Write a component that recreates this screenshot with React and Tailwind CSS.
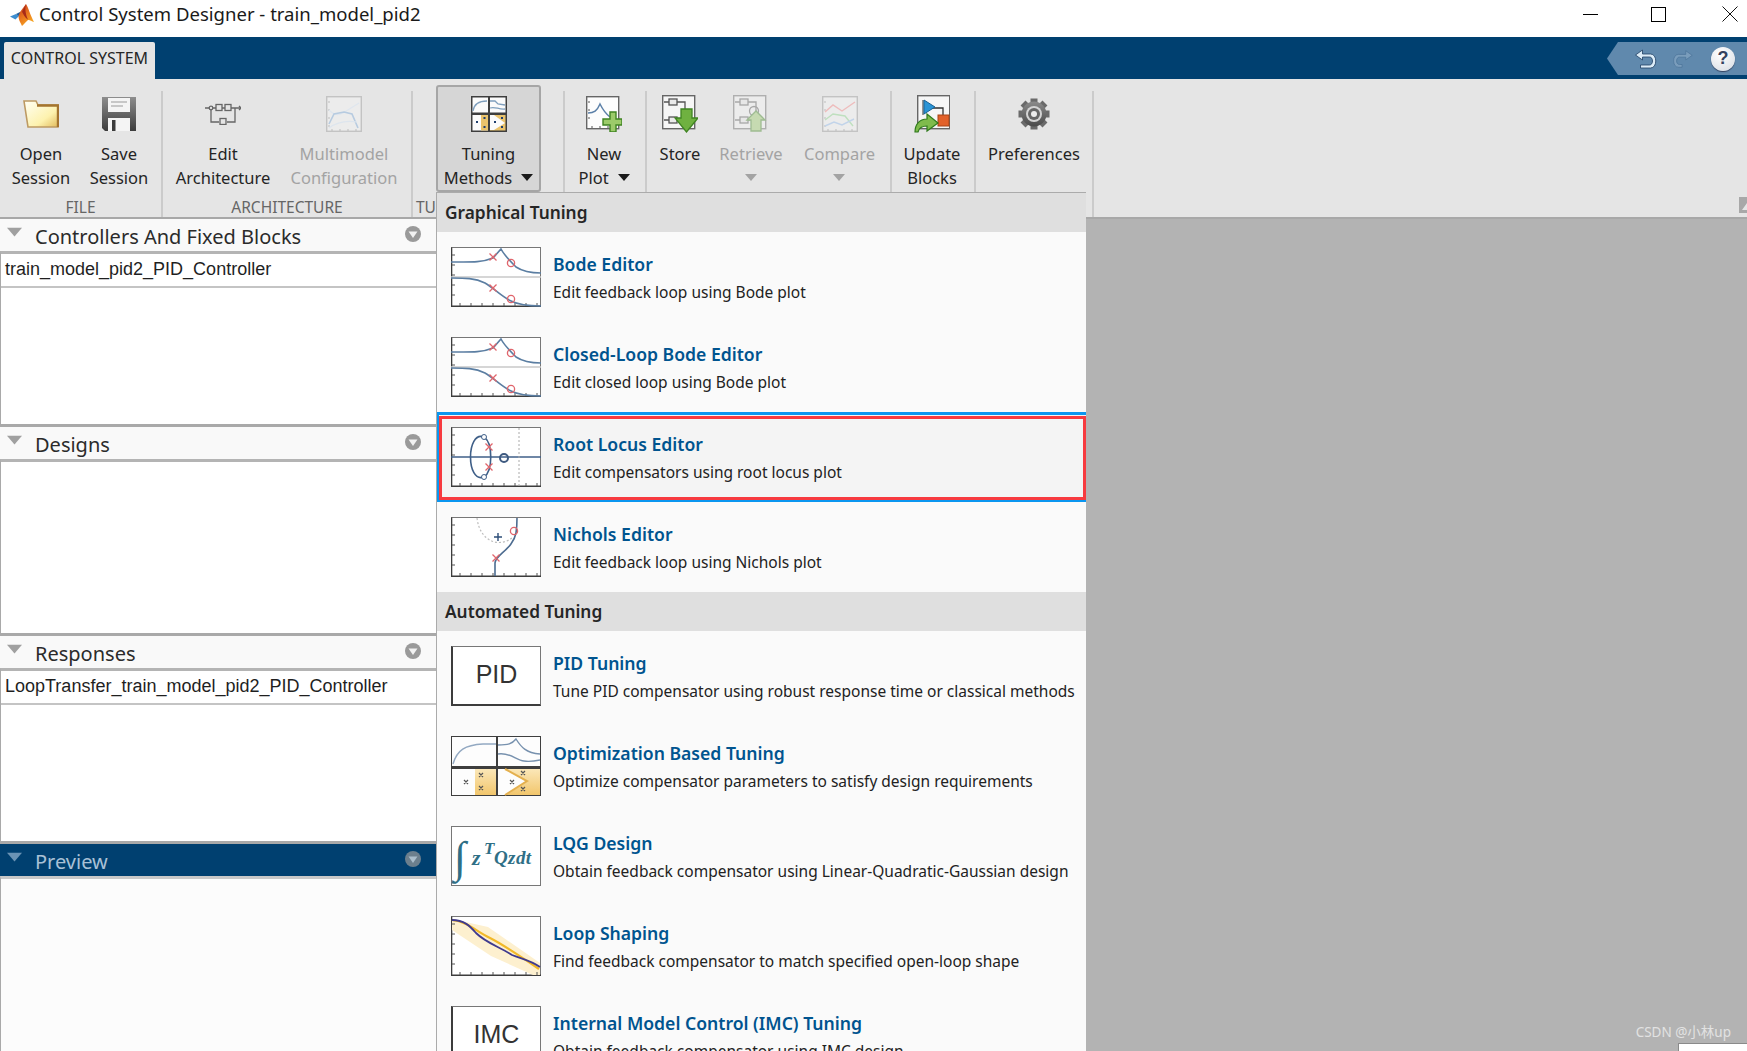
import React from 'react';

const ui = 'font-["Noto_Sans",sans-serif]';

function Caret({ className = '', color = '#1a1a1a' }) {
  return (
    <svg width="12" height="7" viewBox="0 0 12 7" className={className}>
      <path d="M0 0h12L6 7z" fill={color} />
    </svg>
  );
}

function MatlabLogo() {
  return (
    <svg width="24" height="22" viewBox="0 0 24 22">
      <defs>
        <linearGradient id="mlPeak" x1="0" y1="0" x2="0.6" y2="1">
          <stop offset="0" stopColor="#c8361e" />
          <stop offset="0.6" stopColor="#ea7a1e" />
          <stop offset="1" stopColor="#f6a723" />
        </linearGradient>
      </defs>
      <path d="M0 12.5l6-2.6 3 2.2-3.6 3.4z" fill="#3d8ed0" />
      <path d="M6 9.9l4-2 2 3-3 1.4z" fill="#1f5f9e" />
      <path d="M10 8L16 0c1.800 2 5 13 8 18-2.500-1-4.500-2.500-6-2-1.500 1.500-4 4-6 6-1-3-3-4.500-3.500-9.500z" fill="url(#mlPeak)" />
      <path d="M16 0c-1 4-1 9 2 15.800-3-2-5-6-6-8z" fill="#a82a18" />
    </svg>
  );
}

function FolderIcon() {
  return (
    <svg width="36" height="28" viewBox="0 0 36 28">
      <defs>
        <linearGradient id="folderFill" x1="0" y1="0" x2="1" y2="1">
          <stop offset="0" stopColor="#fffff6" />
          <stop offset="0.65" stopColor="#fdf2ae" />
          <stop offset="1" stopColor="#e2bb5c" />
        </linearGradient>
      </defs>
      <path d="M1 1h12l2 4h20v22H5z" fill="url(#folderFill)" stroke="#bd9a63" strokeWidth="1.600" />
      <path d="M14 5.500h21v21.500" fill="none" stroke="#a4742f" strokeWidth="2.400" />
    </svg>
  );
}

function SaveIcon() {
  return (
    <svg width="34" height="34" viewBox="0 0 34 34">
      <defs>
        <linearGradient id="saveFill" x1="0" y1="0" x2="0" y2="1">
          <stop offset="0" stopColor="#8d8d8d" />
          <stop offset="1" stopColor="#3c3c3c" />
        </linearGradient>
      </defs>
      <path d="M0 0h34v34H3l-3-3z" fill="url(#saveFill)" />
      <rect x="6" y="1" width="22" height="14" fill="#f4f4f4" />
      <path d="M9 5h16M9 9h12" stroke="#9a9a9a" strokeWidth="1.200" />
      <rect x="6" y="21" width="22" height="13" fill="#f4f4f4" />
      <rect x="10" y="23" width="3.500" height="11" fill="#3c3c3c" />
    </svg>
  );
}

function ArchIcon() {
  return (
    <svg width="36" height="22" viewBox="0 0 36 22" fill="none" stroke="#666" strokeWidth="1.300">
      <path d="M0 5h36M6 5v14h8M22 19h8V5" />
      <circle cx="6" cy="5" r="1.800" fill="#e5e5e5" />
      <rect x="11" y="1.500" width="6" height="6" fill="#e5e5e5" />
      <rect x="20" y="1.500" width="6" height="6" fill="#e5e5e5" />
      <rect x="15" y="15.500" width="6" height="6" fill="#e5e5e5" />
      <path d="M34 3l2 2-2 2" />
    </svg>
  );
}

function FadedPlot({ lines }) {
  return (
    <svg width="36" height="36" viewBox="0 0 36 36">
      <rect x="0.700" y="0.700" width="34.600" height="34.600" fill="#ececec" stroke="#c3c3c3" strokeWidth="1.400" />
      <path d="M2 6h2M2 14h2M2 22h2M2 30h2M6 33v2M14 33v2M22 33v2M30 33v2" stroke="#bdbdbd" />
      {lines.map((l, i) => (
        <path key={i} d={l.d} fill="none" stroke={l.c} strokeWidth={l.w || 1.200} />
      ))}
    </svg>
  );
}

function TuningIcon() {
  return (
    <svg width="36" height="36" viewBox="0 0 36 36">
      <rect width="36" height="36" fill="#3e3e3e" />
      <rect x="1.500" y="1.500" width="15.500" height="15" fill="#fbfbfb" />
      <rect x="19" y="1.500" width="15.500" height="15" fill="#fbfbfb" />
      <rect x="1.500" y="19" width="15.500" height="15.500" fill="#fbfbfb" />
      <rect x="10" y="19" width="7" height="15.500" fill="#eac36c" />
      <rect x="19" y="19" width="15.500" height="15.500" fill="#eac36c" />
      <path d="M19 19h4l11 8-11 7h-4z" fill="#fbfbfb" />
      <path d="M2 15c1-7 6-10 14-10M19 5h5l3 3 7 1M19 12c5-2 9 2 15 1" fill="none" stroke="#7f9fbd" strokeWidth="1.300" />
      <g fill="#1f3f6f">
        <rect x="5" y="25" width="2" height="2" />
        <rect x="12.500" y="21" width="2" height="2" />
        <rect x="12.500" y="30" width="2" height="2" />
        <rect x="23" y="25" width="2" height="2" />
        <rect x="30" y="21" width="2" height="2" />
        <rect x="30" y="30" width="2" height="2" />
      </g>
    </svg>
  );
}

function NewPlotIcon() {
  return (
    <svg width="36" height="36" viewBox="0 0 36 36">
      <rect x="0.700" y="0.700" width="32" height="32" fill="#fdfdfd" stroke="#666" strokeWidth="1.400" />
      <path d="M2 6h2M2 14h2M2 22h2M6 30v2M14 30v2M22 30v2" stroke="#555" />
      <path d="M2 17c6 0 9-2 12-9 3 6 6 10 10 13" fill="none" stroke="#5c80a8" strokeWidth="1.500" />
      <path d="M24 16h6v7h6v6h-6v7h-6v-7h-7v-6h7z" fill="#9ccb6a" stroke="#3f8422" strokeWidth="1.400" />
    </svg>
  );
}

function StoreIcon({ faded }) {
  return (
    <svg width="36" height="38" viewBox="0 0 36 38" opacity={faded ? 0.42 : 1}>
      <rect x="0.700" y="0.700" width="32" height="33" fill="#f6f6f6" stroke="#666" strokeWidth="1.400" />
      <g fill="#eaeaea" stroke="#555" strokeWidth="1.300">
        <rect x="7" y="4" width="8" height="6" />
        <rect x="7" y="22" width="8" height="6" />
        <path d="M2 7h5M15 7h8v9M2 25h5M15 25h8" fill="none" />
      </g>
      {faded ? (
        <>
          <circle cx="21" cy="16" r="4.500" fill="none" stroke="#555" strokeWidth="1.300" />
          <path d="M14 25l9-9 9 9h-4v11h-10V25z" fill="#9ccb6a" stroke="#3f8422" strokeWidth="1.300" />
        </>
      ) : (
        <path d="M19 14h11v9h6L24.500 37 13 23h6z" fill="#6fb140" stroke="#3f8422" strokeWidth="1.300" />
      )}
    </svg>
  );
}

function UpdateIcon() {
  return (
    <svg width="36" height="38" viewBox="0 0 36 38">
      <rect x="3.700" y="0.700" width="32" height="33" fill="#f6f6f6" stroke="#666" strokeWidth="1.400" />
      <path d="M9 5v15" stroke="#333" />
      <path d="M14 13h15v8" fill="none" stroke="#333" strokeWidth="1.300" />
      <path d="M10 5l11 7-11 7z" fill="#2a94d6" stroke="#1a6296" />
      <rect x="24" y="20" width="11" height="11" fill="#e2612a" stroke="#a84416" />
      <path d="M1 37c0-7 4-13 12-13v-5l11 9-11 8v-5c-5 0-8 2-9 6z" fill="#7fbb4c" stroke="#2f7a1c" strokeWidth="1.200" />
    </svg>
  );
}

function GearIcon() {
  const teeth = [0, 45, 90, 135, 180, 225, 270, 315];
  return (
    <svg width="32" height="32" viewBox="0 0 32 32">
      <defs>
        <linearGradient id="gearFill" x1="0" y1="0" x2="0" y2="1">
          <stop offset="0" stopColor="#8a8a8a" />
          <stop offset="1" stopColor="#4a4a4a" />
        </linearGradient>
      </defs>
      {teeth.map((a) => (
        <rect key={a} x="12.500" y="0.500" width="7" height="6" fill="#6a6a6a" transform={`rotate(${a} 16 16)`} />
      ))}
      <circle cx="16" cy="16" r="12.500" fill="url(#gearFill)" />
      <circle cx="16" cy="16" r="8" fill="#d4d4d4" />
      <circle cx="16" cy="16" r="6" fill="#666" />
      <circle cx="16" cy="16" r="3" fill="#ececec" />
    </svg>
  );
}

// caret sits after the last label line, or on its own line for one-line tools
function Tool({ w, icon, lines, caret, disabled, active }) {
  const textColor = disabled ? 'text-[#a3a3a3]' : 'text-[#242424]';
  const caretColor = disabled ? '#a3a3a3' : '#1a1a1a';
  return (
    <div
      className={`flex flex-col items-center shrink-0 ${w} ${
        active
          ? 'relative z-0 -mt-[6px] h-[107px] pt-[9px] rounded-[3px] border-2 border-[#a6a6a6] bg-[#d6d6d6]'
          : 'pt-[5px]'
      }`}
    >
      <div className="h-[36px] flex items-center justify-center">{icon}</div>
      <div className={`mt-[10px] text-center text-[16.5px] leading-[23.500px] whitespace-nowrap ${textColor}`}>
        {lines.map((l, i) => (
          <div key={i} className="flex items-center justify-center gap-[9px]">
            {l}
            {caret && lines.length > 1 && i === lines.length - 1 && <Caret color={caretColor} />}
          </div>
        ))}
        {caret && lines.length === 1 && (
          <div className="h-[23.500px] flex items-center justify-center">
            <Caret color={caretColor} />
          </div>
        )}
      </div>
    </div>
  );
}

function Group({ w, label, labelClass = 'text-center', children }) {
  return (
    <div className={`${w} shrink-0 mt-[12px] flex flex-col border-r-2 border-[#cbcbcb]`}>
      <div className="flex flex-1">{children}</div>
      <div className={`h-[20px] text-[15.500px] leading-[20px] text-[#666] ${labelClass}`}>{label}</div>
    </div>
  );
}

function Toolstrip() {
  return (
    <div className="flex h-[140px] shrink-0 bg-[#e5e5e5] border-b-2 border-[#a8a8a8]">
      <Group w="w-[163px]" label="FILE">
        <Tool w="w-[82px]" icon={<FolderIcon />} lines={['Open', 'Session']} />
        <Tool w="w-[74px]" icon={<SaveIcon />} lines={['Save', 'Session']} />
      </Group>
      <Group w="w-[250px]" label="ARCHITECTURE">
        <Tool w="w-[120px]" icon={<ArchIcon />} lines={['Edit', 'Architecture']} />
        <Tool
          w="w-[122px]"
          disabled
          icon={
            <FadedPlot
              lines={[
                { d: 'M3 14c6 6 10 5 14 3l16-10', c: '#dfe6ee' },
                { d: 'M3 28l5-10 10-2 8 2 6 14', c: '#b7cbe0', w: 1.600 },
                { d: 'M3 32c8-6 16-8 28-6', c: '#dde5ee' },
              ]}
            />
          }
          lines={['Multimodel', 'Configuration']}
        />
      </Group>
      <Group w="w-[152px]" label="TU" labelClass="pl-[3px]">
        <div className="w-[23px] shrink-0" />
        <Tool w="w-[105px]" active caret icon={<TuningIcon />} lines={['Tuning', 'Methods']} />
      </Group>
      <Group w="w-[82px]" label="">
        <Tool w="w-[78px]" caret icon={<NewPlotIcon />} lines={['New', 'Plot']} />
      </Group>
      <Group w="w-[245px]" label="">
        <Tool w="w-[66px]" icon={<StoreIcon />} lines={['Store']} />
        <Tool w="w-[76px]" disabled caret icon={<StoreIcon faded />} lines={['Retrieve']} />
        <Tool
          w="w-[101px]"
          disabled
          caret
          icon={
            <FadedPlot
              lines={[
                { d: 'M3 16l8-7 9 6 13-9', c: '#eebcbc', w: 1.400 },
                { d: 'M3 24l8-6 12 2 8 10', c: '#bfe0bf', w: 1.400 },
                { d: 'M3 30l9-4 8 3 12-6', c: '#c2d4ea', w: 1.400 },
              ]}
            />
          }
          lines={['Compare']}
        />
      </Group>
      <Group w="w-[84px]" label="">
        <Tool w="w-[80px]" icon={<UpdateIcon />} lines={['Update', 'Blocks']} />
      </Group>
      <Group w="w-[118px]" label="">
        <Tool w="w-[116px]" icon={<GearIcon />} lines={['Preferences']} />
      </Group>
      <div className="flex-1 flex items-end justify-end pb-[4px]">
        <svg width="8" height="16" viewBox="0 0 8 16">
          <path d="M0 0h8v3H3l5 0v3L3 13h5v3H0z" fill="#a8a8a8" />
        </svg>
      </div>
    </div>
  );
}

function CircleBadge() {
  return (
    <svg width="16" height="16" viewBox="0 0 16 16" className="shrink-0">
      <circle cx="8" cy="8" r="8" fill="#9a9a9a" />
      <path d="M3.500 5.500h9L8 12z" fill="#f2f2f2" />
    </svg>
  );
}

function Section({ title, h, item, selected }) {
  const headerCls = selected ? 'bg-[#004070] text-[#a9c1d6]' : 'bg-[#f9f9f9] text-[#2b2b2b]';
  return (
    <div className={`${h} flex flex-col`}>
      <div className={`h-[32px] shrink-0 flex items-center pl-[7px] pr-[16px] ${headerCls}`}>
        <Caret color={selected ? '#6b93b4' : '#a0a0a0'} className="w-[15px] h-[10px] -mt-[6px]" />
        <span className="ml-[13px] text-[20px] leading-[26px] flex-1 mt-[3px]">{title}</span>
        <div className={selected ? 'opacity-70 -mt-[2px]' : '-mt-[2px]'}>
          <CircleBadge />
        </div>
      </div>
      <div
        className={`flex-1 min-h-0 border-x border-[#a9a9a9] border-t-[3px] ${
          selected ? 'border-t-[#c8c8c8] bg-[#fcfcfc]' : 'border-t-[#b4b4b4] border-b-[3px] border-b-[#a9a9a9] bg-white'
        }`}
      >
        {item && (
          <div className='h-[34px] border-b-2 border-[#c4c4c4] pl-[4px] font-["Liberation_Sans",sans-serif] text-[18px] leading-[31px] text-[#1f1f1f]'>
            {item}
          </div>
        )}
      </div>
    </div>
  );
}

function IconFrame({ children }) {
  return (
    <svg width="90" height="60" viewBox="0 0 90 60" className="block shrink-0">
      <rect x="0.500" y="0.500" width="89" height="59" fill="#fff" stroke="#777" />
      <path d="M0.500 60V0.500M0 59.200h90" stroke="#3c3c3c" strokeWidth="1.600" />
      {children}
    </svg>
  );
}

const Ticks = () => (
  <path
    d="M1 8h3M1 18h3M1 28h3M1 38h3M1 48h3M9 56v3M20 56v3M31 56v3M42 56v3M53 56v3M64 56v3M75 56v3M86 56v3"
    stroke="#555"
  />
);

function RedX({ x, y }) {
  return <path d={`M${x - 3.500} ${y - 3.500}l7 7m0-7l-7 7`} stroke="#e0656c" strokeWidth="1.300" />;
}

function BodeGlyph() {
  return (
    <IconFrame>
      <Ticks />
      <path d="M0 30h90" stroke="#c8c8c8" strokeWidth="1.500" />
      <path d="M0 15c18 0 30 1 42-4l8-9c3 6 9 12 15 18 6 4 14 6 25 6" fill="none" stroke="#5b7ea2" strokeWidth="1.600" />
      <path d="M0 31c14 0 24 0 34 5 10 6 16 13 26 18 8 4 18 5 30 5" fill="none" stroke="#5b7ea2" strokeWidth="1.600" />
      <RedX x={42} y={10} />
      <circle cx="60" cy="16" r="3.600" fill="none" stroke="#e0656c" strokeWidth="1.300" />
      <RedX x={42} y={41} />
      <circle cx="60" cy="52" r="3.600" fill="none" stroke="#e0656c" strokeWidth="1.300" />
    </IconFrame>
  );
}

function RootGlyph() {
  return (
    <IconFrame>
      <Ticks />
      <path d="M0 30h90" stroke="#3f5f88" strokeWidth="1.400" />
      <path d="M68 1v58" stroke="#aaa" strokeDasharray="2 2" />
      <path d="M33 10c-18-7-18 47 0 40M33 10c9 6 9 34 0 40" fill="none" stroke="#3f5f88" strokeWidth="1.600" />
      <circle cx="33" cy="10" r="2.500" fill="#fff" stroke="#3f5f88" />
      <circle cx="33" cy="50" r="2.500" fill="#fff" stroke="#3f5f88" />
      <circle cx="53" cy="31" r="4" fill="none" stroke="#3e5a80" strokeWidth="2" />
      <RedX x={38} y={20} />
      <RedX x={38} y={40} />
    </IconFrame>
  );
}

function NicholsGlyph() {
  return (
    <IconFrame>
      <Ticks />
      <path d="M26 1c3 25 24 30 36 19" fill="none" stroke="#bdbdbd" strokeDasharray="2 2" strokeWidth="1.200" />
      <path d="M44 59V46c0-8 18-14 21-30 1-6 1-10 1-15" fill="none" stroke="#4d6c90" strokeWidth="1.600" />
      <path d="M47 16v8M43 20h8" stroke="#2d4d78" strokeWidth="1.400" />
      <RedX x={45} y={41} />
      <circle cx="63" cy="14" r="3.600" fill="none" stroke="#e0656c" strokeWidth="1.300" />
    </IconFrame>
  );
}

function TextGlyph({ text }) {
  return (
    <div className='w-[90px] h-[60px] shrink-0 flex items-center justify-center pb-[2px] border border-[#777] border-l-2 border-b-2 border-l-[#3c3c3c] border-b-[#3c3c3c] bg-white font-["Liberation_Sans",sans-serif] text-[25px] text-[#333]'>
      {text}
    </div>
  );
}

function OptGlyph() {
  return (
    <svg width="90" height="60" viewBox="0 0 90 60" className="block shrink-0">
      <defs>
        <linearGradient id="optYel" x1="0" y1="0" x2="0" y2="1">
          <stop offset="0" stopColor="#fbe7b8" />
          <stop offset="1" stopColor="#f2c66c" />
        </linearGradient>
      </defs>
      <rect width="90" height="60" fill="#3e3e3e" />
      <rect x="1" y="1" width="44" height="29" fill="#fdfdfd" />
      <rect x="47" y="1" width="42" height="29" fill="#fdfdfd" />
      <rect x="1" y="33" width="44" height="26" fill="#fdfdfd" />
      <rect x="24" y="33" width="21" height="26" fill="url(#optYel)" />
      <rect x="47" y="33" width="42" height="26" fill="url(#optYel)" />
      <path d="M47 33h8l22 12-22 14h-8z" fill="#fdfdfd" />
      <path d="M54 33l22 12-22 14" fill="none" stroke="#e4b04e" strokeWidth="2" />
      <path d="M2 28c4-14 12-19 30-20h13" fill="none" stroke="#93a9c2" strokeWidth="1.400" />
      <path d="M47 9c10 0 14-1 18-6 5 8 10 14 24 15M47 18c12-2 18 6 26 7 6 1 11 0 16-1" fill="none" stroke="#7791ae" strokeWidth="1.400" />
      <g stroke="#555" strokeWidth="1.200">
        <path d="M13 44l4 4m0-4l-4 4M28 37l4 4m0-4l-4 4M28 50l4 4m0-4l-4 4M59 44l4 4m0-4l-4 4M70 35l4 4m0-4l-4 4M70 51l4 4m0-4l-4 4" />
      </g>
    </svg>
  );
}

function LqgGlyph() {
  return (
    <svg width="90" height="60" viewBox="0 0 90 60" className="block shrink-0">
      <rect x="0.500" y="0.500" width="89" height="59" fill="#fff" stroke="#777" />
      <g fill="#2f6f86" fontFamily="'Liberation Serif', serif" fontStyle="italic" fontWeight="bold">
        <text x="3" y="46" fontSize="44" fontWeight="normal">∫</text>
        <text x="21" y="39" fontSize="22">z</text>
        <text x="33" y="28" fontSize="17">T</text>
        <text x="43" y="38" fontSize="19" letterSpacing="0.400">Qzdt</text>
      </g>
    </svg>
  );
}

function LoopGlyph() {
  return (
    <IconFrame>
      <path d="M1 3l36 8 52 36v12H82L40 40 1 14z" fill="#fdf0cf" />
      <Ticks />
      <path d="M1 4c16 2 22 10 38 18 12 6 30 18 49 31" fill="none" stroke="#f2b929" strokeWidth="2.200" />
      <path d="M1 4c12 0 18 6 24 13 10 10 24 14 36 22 10 4 18 5 28 12" fill="none" stroke="#3f3a8e" strokeWidth="1.800" />
    </IconFrame>
  );
}

const graphicalItems = [
  { title: 'Bode Editor', desc: 'Edit feedback loop using Bode plot', glyph: <BodeGlyph /> },
  { title: 'Closed-Loop Bode Editor', desc: 'Edit closed loop using Bode plot', glyph: <BodeGlyph /> },
  { title: 'Root Locus Editor', desc: 'Edit compensators using root locus plot', glyph: <RootGlyph />, hot: true },
  { title: 'Nichols Editor', desc: 'Edit feedback loop using Nichols plot', glyph: <NicholsGlyph /> },
];

const automatedItems = [
  { title: 'PID Tuning', desc: 'Tune PID compensator using robust response time or classical methods', glyph: <TextGlyph text="PID" /> },
  { title: 'Optimization Based Tuning', desc: 'Optimize compensator parameters to satisfy design requirements', glyph: <OptGlyph /> },
  { title: 'LQG Design', desc: 'Obtain feedback compensator using Linear-Quadratic-Gaussian design', glyph: <LqgGlyph /> },
  { title: 'Loop Shaping', desc: 'Find feedback compensator to match specified open-loop shape', glyph: <LoopGlyph /> },
  { title: 'Internal Model Control (IMC) Tuning', desc: 'Obtain feedback compensator using IMC design', glyph: <TextGlyph text="IMC" /> },
];

function MenuRow({ title, desc, glyph, hot }) {
  return (
    <div className={`relative h-[90px] shrink-0 flex gap-[12px] pl-[14px] pt-[15px] ${hot ? 'bg-[#f4f4f4]' : ''}`}>
      {glyph}
      <div className="pt-[5px] whitespace-nowrap">
        <div className="text-[17.600px] leading-[24px] font-semibold text-[#00548f]">{title}</div>
        <div className="mt-[4px] text-[15.500px] leading-[24px] text-[#222]">{desc}</div>
      </div>
      {hot && (
        <>
          <div className="absolute inset-0 border-t-[3px] border-b-2 border-l-2 border-[#0a96f0]" />
          <div className="absolute left-[2px] right-0 top-[4px] bottom-[2px] border-[3px] border-[#f73a3f]" />
        </>
      )}
    </div>
  );
}

function MenuHeader({ children }) {
  return (
    <div className="h-[39px] shrink-0 flex items-center pl-[8px] pt-[1px] bg-[#dfdfdf] text-[17.300px] font-semibold text-[#262626]">
      {children}
    </div>
  );
}

function TuningMenu() {
  return (
    <div className="absolute z-10 left-[436px] top-[192px] w-[650px] h-[859px] overflow-hidden flex flex-col bg-[#fafafa] border-l border-t border-[#ababab]">
      <MenuHeader>Graphical Tuning</MenuHeader>
      {graphicalItems.map((it) => (
        <MenuRow key={it.title} {...it} />
      ))}
      <MenuHeader>Automated Tuning</MenuHeader>
      {automatedItems.map((it) => (
        <MenuRow key={it.title} {...it} />
      ))}
    </div>
  );
}

function QuickAccess() {
  return (
    <div
      className="absolute right-0 top-[5px] w-[140px] h-[33px] bg-[#6089ad] flex items-center"
      style={{ clipPath: 'polygon(11px 0, 100% 0, 100% 100%, 11px 100%, 0 50%)' }}
    >
      <svg width="25" height="24" viewBox="0 0 24 24" className="ml-[26px]">
        <path d="M9 3L2 8l7 5v-3h7c4 0 4 8 0 8H7v3h10c7 0 7-14 0-14H9z" fill="#dcecf7" stroke="#1f3f62" strokeWidth="0.800" />
      </svg>
      <svg width="22" height="24" viewBox="0 0 24 24" className="ml-[14px]">
        <path d="M15 3l7 5-7 5v-3H8c-4 0-4 8 0 8h3v3H7C0 21 0 7 7 7h8z" fill="#7a9dbc" stroke="#4b7499" strokeWidth="0.800" />
      </svg>
      <div className='ml-[17px] w-[24px] h-[24px] rounded-full bg-[radial-gradient(circle_at_40%_30%,#ffffff,#d6dbe2)] flex items-center justify-center font-["Liberation_Sans",sans-serif] font-bold text-[18px] text-[#33415e] shadow-[0_1px_1px_#33415e]'>
        ?
      </div>
    </div>
  );
}

export default function App() {
  return (
    <div className={`relative w-[1747px] h-[1051px] overflow-hidden flex flex-col bg-[#b3b3b3] ${ui}`}>
      <div className="h-[37px] shrink-0 bg-white flex items-center">
        <div className="ml-[10px] -mt-[8px]">
          <MatlabLogo />
        </div>
        <div className="ml-[5px] -mt-[9px] text-[18.550px] leading-[26px] text-[#1a1a1a] whitespace-nowrap">
          Control System Designer - train_model_pid2
        </div>
        <div className="ml-auto flex items-center -mt-[9px] h-[16px]">
          <div className="w-[15px] h-px bg-black" />
          <div className="ml-[53px] w-[15px] h-[15px] border border-black" />
          <svg width="16" height="16" viewBox="0 0 16 16" className="ml-[56px] mr-[9px]">
            <path d="M0.500 0.500l15 15m0-15l-15 15" stroke="#111" />
          </svg>
        </div>
      </div>

      <div className="relative h-[42px] shrink-0 bg-[#004070] pl-[4px] pt-[5px]">
        <div className="w-[151px] h-[37px] rounded-t-[2px] bg-[#e5e5e5] text-[#262626] text-[16px] leading-[33px] text-center whitespace-nowrap">
          CONTROL SYSTEM
        </div>
        <QuickAccess />
      </div>

      <Toolstrip />

      <div className="flex-1 min-h-0 flex">
        <div className="w-[437px] shrink-0 flex flex-col">
          <Section h="h-[208px]" title="Controllers And Fixed Blocks" item="train_model_pid2_PID_Controller" />
          <Section h="h-[209px]" title="Designs" />
          <Section h="h-[208px]" title="Responses" item="LoopTransfer_train_model_pid2_PID_Controller" />
          <Section h="flex-1" title="Preview" selected />
        </div>
      </div>

      <TuningMenu />

      <div className='absolute right-[16px] bottom-[10px] text-[13.500px] leading-[18px] text-[#e2e2e2] font-["Noto_Sans","Noto_Sans_CJK_SC",sans-serif]'>
        CSDN @小林up
      </div>
      <div className="absolute right-0 bottom-0 w-[69px] h-[8px] bg-white border-l border-t border-[#8a8a8a]" />
    </div>
  );
}
